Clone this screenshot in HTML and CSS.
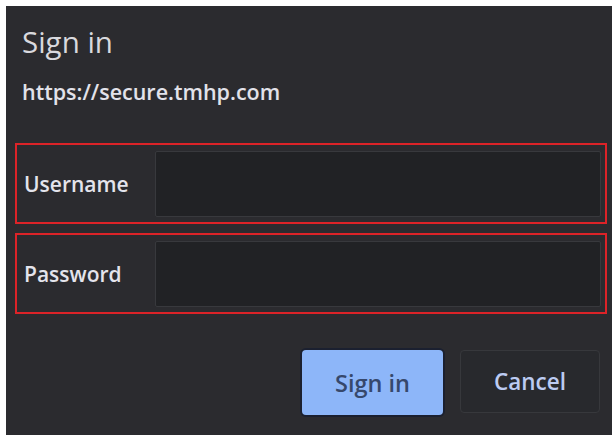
FILE: index.html
```html
<!DOCTYPE html>
<html lang="en">
<head>
<meta charset="utf-8">
<title>Sign in</title>
<link rel="stylesheet" href="styles.css">
</head>
<body>
<div class="dialog">
  <h1 class="title">Sign in</h1>
  <p class="origin">https://secure.tmhp.com</p>
  <div class="field">
    <label class="field-label" for="user">Username</label>
    <input class="field-input" id="user" type="text">
  </div>
  <div class="field field-next">
    <label class="field-label" for="pass">Password</label>
    <input class="field-input" id="pass" type="password">
  </div>
  <div class="actions">
    <button class="btn btn-primary" type="button">Sign in</button>
    <button class="btn btn-secondary" type="button">Cancel</button>
  </div>
</div>
</body>
</html>
```

FILE: styles.css
```css
html, body {
  margin: 0;
  background: #ffffff;
}

.dialog {
  margin: 6px 1px 0 6px;
  height: 429px;
  padding-top: 17px;
  box-sizing: border-box;
  background: #2b2b2f;
  font-family: "Open Sans", "Noto Sans", sans-serif;
  overflow: hidden;
}

.title {
  margin: 0 0 17px 16px;
  font-size: 29.5px;
  line-height: 38px;
  font-weight: 400;
  color: #d9d9de;
}

.origin {
  margin: 0 0 37px 16px;
  font-size: 21.5px;
  line-height: 28px;
  font-weight: 600;
  color: #e2e2ea;
}

.field {
  display: flex;
  align-items: center;
  height: 81px;
  margin: 0 5px 0 9px;
  border: 2px solid #dc2328;
  box-sizing: border-box;
}

.field-next {
  margin-top: 9px;
}

.field-label {
  width: 131px;
  padding-left: 7px;
  flex: none;
  font-size: 21px;
  font-weight: 600;
  color: #e4e4ec;
}

.field-input {
  flex: 1;
  min-width: 0;
  height: 66px;
  margin: 1px 4px 0 0;
  box-sizing: border-box;
  background: #212225;
  border: 1px solid #38393d;
  border-radius: 2px;
  outline: none;
  color: #e8eaed;
  font: inherit;
}

.actions {
  display: flex;
  justify-content: flex-end;
  align-items: flex-start;
  gap: 17px;
  margin: 36px 12px 0 0;
}

.btn {
  box-sizing: border-box;
  font-family: inherit;
  font-size: 23.5px;
  font-weight: 600;
  border-radius: 4px;
  padding: 0;
  cursor: pointer;
}

.btn-primary {
  width: 141px;
  height: 65px;
  background: #8db6f9;
  color: #36486c;
  border: none;
  box-shadow: 0 0 0 2px #1b2030;
}

.btn-secondary {
  width: 140px;
  height: 63px;
  background: #28292d;
  color: #bccbf2;
  border: 1px solid #37383c;
  font-size: 22.5px;
}
```
